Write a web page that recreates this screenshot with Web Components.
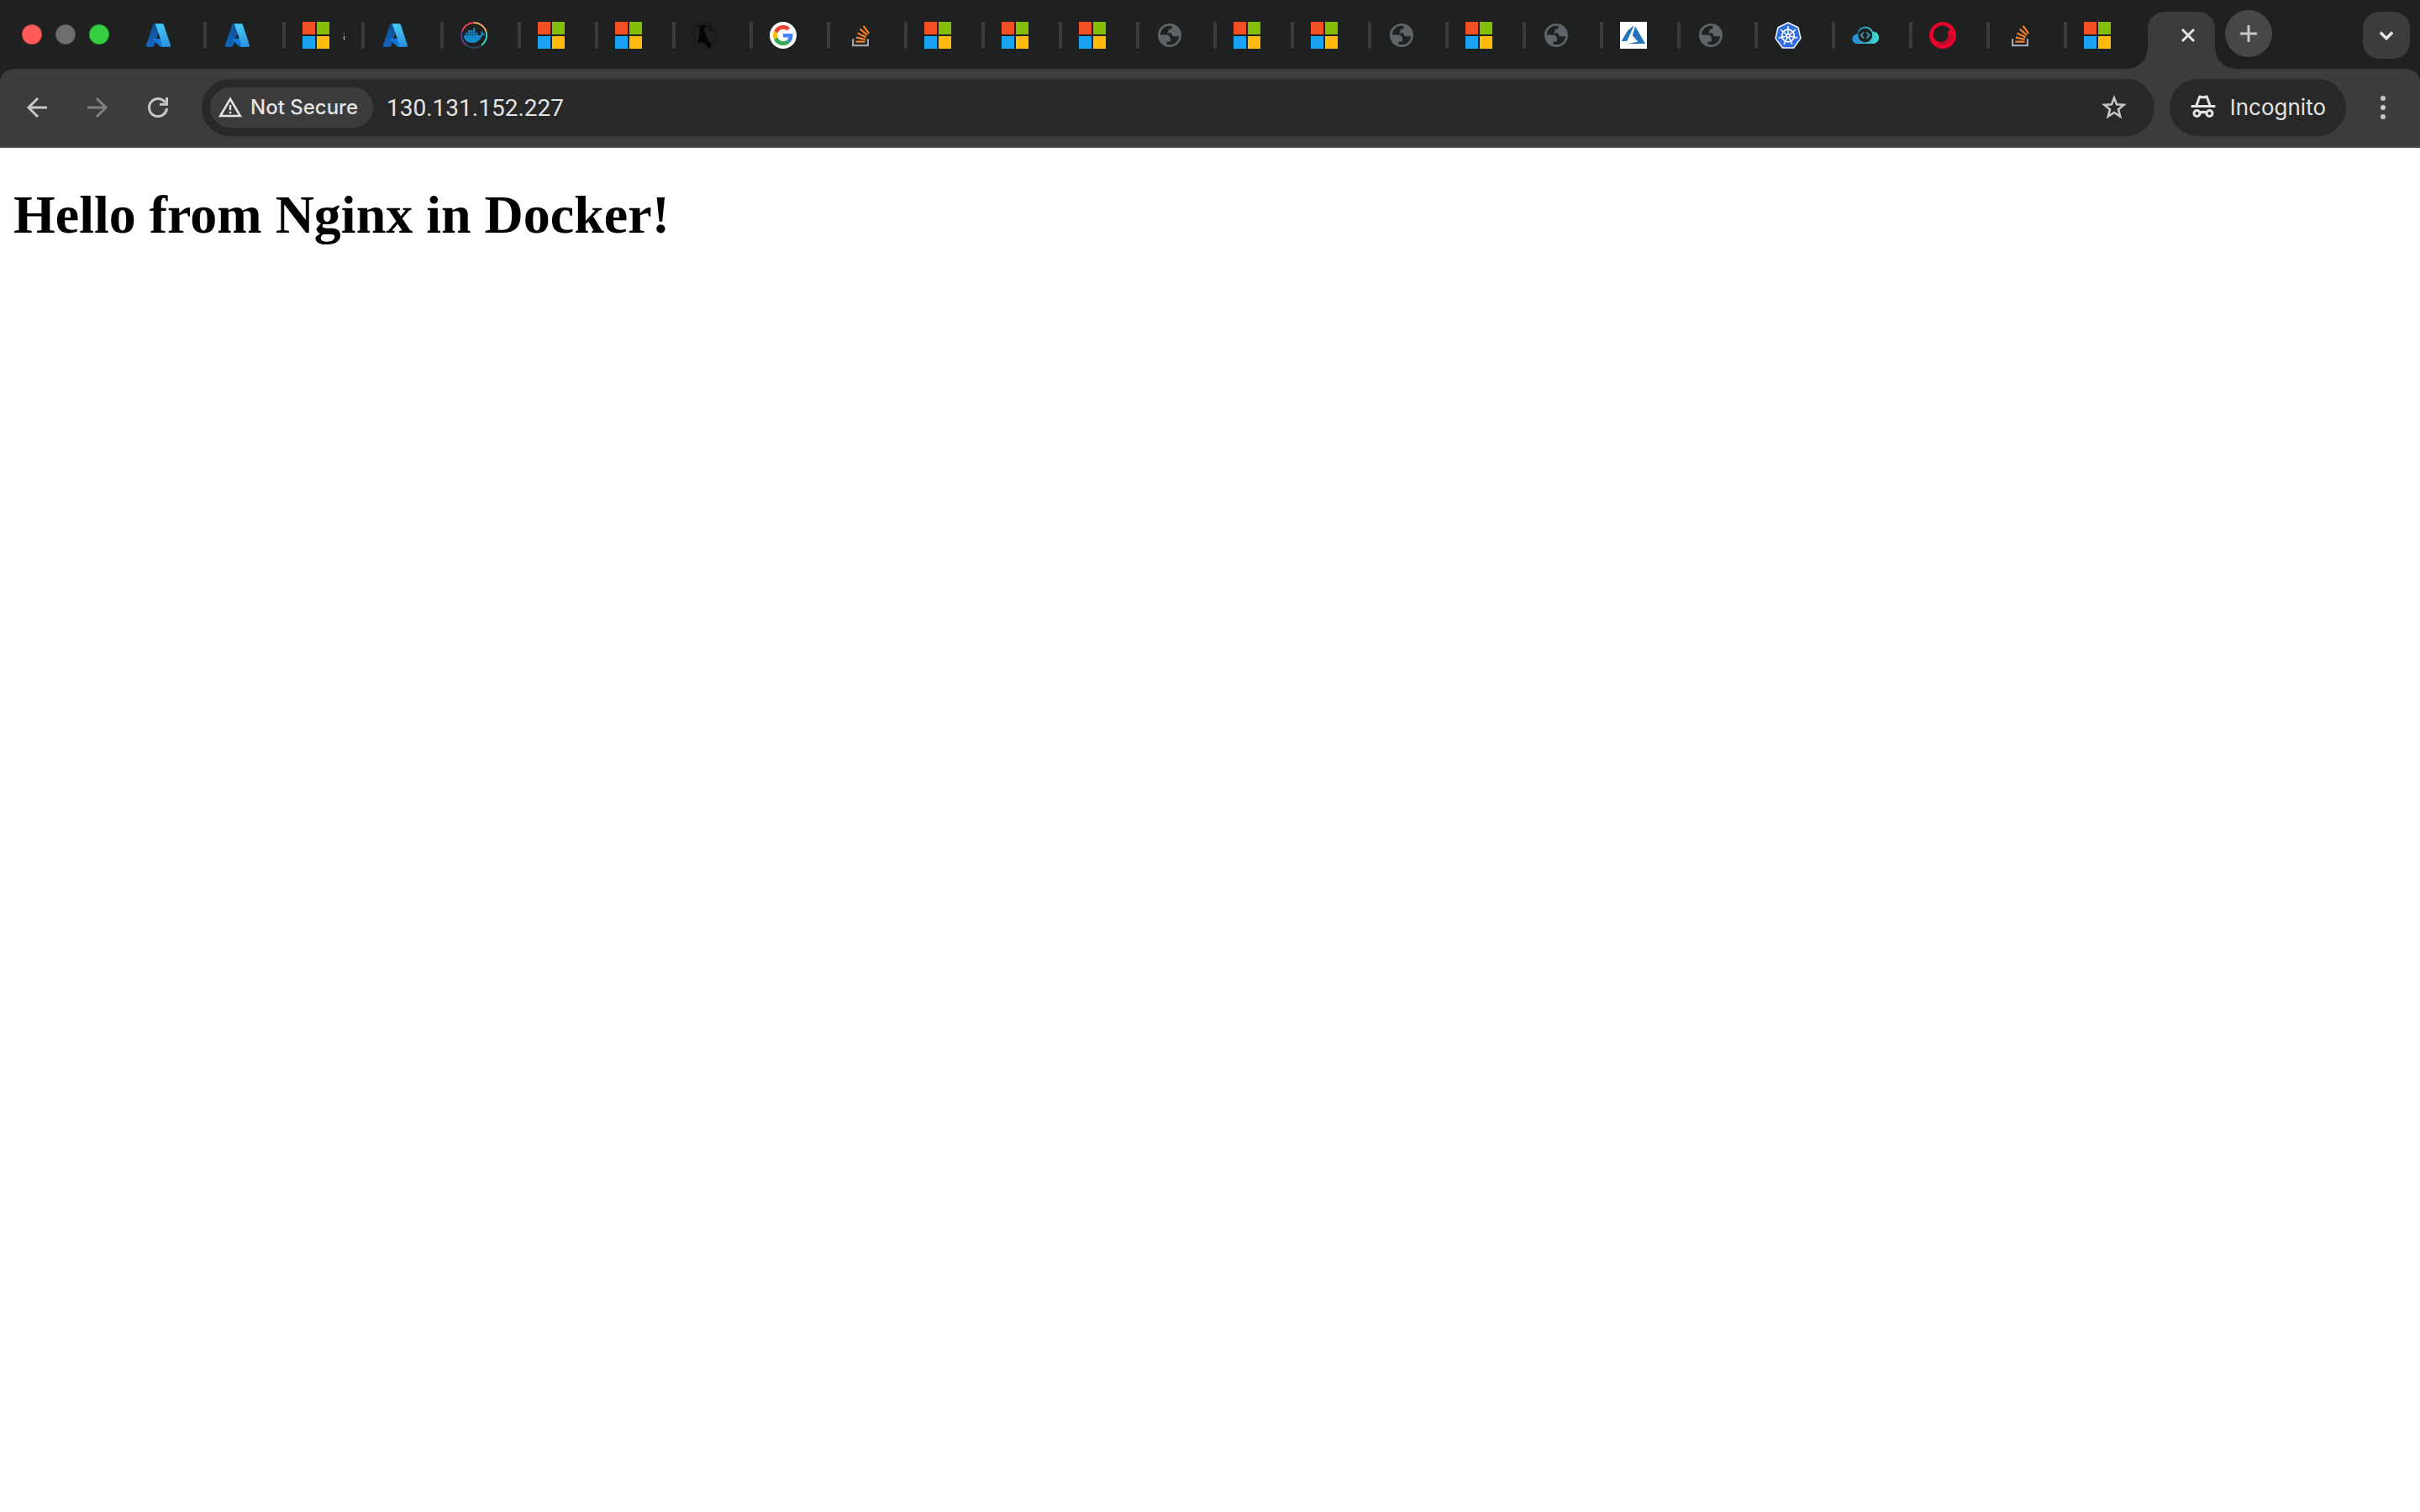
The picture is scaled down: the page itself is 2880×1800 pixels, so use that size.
<!DOCTYPE html>
<html lang="en">
<head>
<meta charset="utf-8">
<title>130.131.152.227</title>
<style>
  body { margin: 0; background: #fff; font-family: "Liberation Serif", "Times New Roman", serif; }
  h1 { margin: 0; font-size: 64px; line-height: 74px; font-weight: 700; color: #000; }
</style>
</head>
<body>
<browser-window>
  <tab-strip slot="tabs"></tab-strip>
  <tool-bar slot="toolbar" address="130.131.152.227"></tool-bar>
  <h1>Hello from Nginx in Docker!</h1>
</browser-window>

<script>
const msTiles = `<path fill="#f34f24" d="M0 0h15v15H0z"/><path fill="#84bf06" d="M17 0h15v15H17z"/><path fill="#1aa3f2" d="M0 17h15v15H0z"/><path fill="#ffba0b" d="M17 17h15v15H17z"/>`;

const spokes = Array.from({ length: 7 }, (_, i) =>
  `<path d="M16 14.5V5.6" transform="rotate(${i * 360 / 7} 16 16.5)"/>`).join("");

const ICONS = {
  azure: `<defs>
      <linearGradient id="a" x1="60" y1="8" x2="20" y2="90" gradientUnits="userSpaceOnUse"><stop stop-color="#114a8b"/><stop offset="1" stop-color="#0f66c0"/></linearGradient>
      <linearGradient id="b" x1="46" y1="10" x2="76" y2="88" gradientUnits="userSpaceOnUse"><stop stop-color="#46cbf7"/><stop offset="1" stop-color="#2c91e0"/></linearGradient></defs>
    <g transform="translate(.5 0) scale(.3333)">
      <path fill="url(#a)" d="M33.338 6.544h26.038l-27.03 80.087a4.152 4.152 0 0 1-3.933 2.824H8.149a4.145 4.145 0 0 1-3.928-5.47L29.404 9.368a4.152 4.152 0 0 1 3.934-2.825z"/>
      <path fill="#0f78d8" d="M71.175 60.261h-41.29a1.911 1.911 0 0 0-1.305 3.309l26.532 24.764a4.171 4.171 0 0 0 2.846 1.121h23.38z"/>
      <path fill="url(#b)" d="M66.595 9.364a4.145 4.145 0 0 0-3.928-2.82H33.648a4.146 4.146 0 0 1 3.928 2.82l25.184 74.62a4.146 4.146 0 0 1-3.928 5.472h29.02a4.146 4.146 0 0 0 3.927-5.472z"/></g>`,
  microsoft: msTiles,
  docker: `<g fill="none" stroke-width="1.8">
      <path stroke="#f2435a" d="M2 11A15 15 0 0 1 16 1"/><path stroke="#f6a95b" d="M16 1A15 15 0 0 1 30.6 12"/>
      <path stroke="#3de0cf" d="M30.6 12A15 15 0 0 1 25 28"/><path stroke="#27445c" d="M25 28A15 15 0 0 1 7 28"/>
      <path stroke="#663da6" d="M7 28A15 15 0 0 1 2 11"/></g>
    <g fill="#1488c9"><path d="M4 16h18.6c1 0 1.8-.3 2.3-.8-1-1.4-.8-3 .2-4.4 1.2.8 1.6 1.8 1.5 2.8 1 0 1.8.2 2.4.7-.5 1.4-1.700 2.100-3.300 2.200C23.600 22 19.500 25 14 25 7.500 25 4 21.500 4 16z"/>
      <path d="M6 12.800h2.500v2.600H6zM9 12.800h2.500v2.600H9zM12 12.800h2.500v2.600H12zM15 12.800h2.500v2.600H15zM18 12.800h2.500v2.600H18zM9 9.900h2.500v2.500H9zM12 9.900h2.500v2.500H12zM15 9.900h2.500v2.500H15zM15 7h2.500v2.500H15z"/></g>`,
  penguin: `<circle cx="15" cy="15" r="14" fill="none" stroke="#191b1a" stroke-width="2"/>
    <path fill="#050505" d="M8.500 5.500C10 3.500 13 3 16 4l-.500 1.500c-1.500 2-1.500 5-.500 8l2.500 6 2 4.500 2.500 1.500-1 6.500h-2.500l-1-4-4-3.500L6 25l.500-3 1.500-3z"/>
    <path fill="none" stroke="#101211" stroke-width="2" d="M17.500 5c3 0 6 1.500 6.500 5.500-1.500-2-4-1.500-5 0"/>`,
  google: `<circle cx="16" cy="16" r="16" fill="#fff"/><g transform="translate(4 4) scale(.5)">
      <path fill="#ea4335" d="M24 9.500c3.540 0 6.710 1.220 9.210 3.600l6.850-6.850C35.900 2.380 30.470 0 24 0 14.620 0 6.510 5.380 2.560 13.220l7.980 6.190C12.430 13.720 17.740 9.500 24 9.500z"/>
      <path fill="#4285f4" d="M46.980 24.550c0-1.570-.150-3.090-.380-4.550H24v9.020h12.940c-.580 2.960-2.260 5.480-4.780 7.180l7.730 6c4.510-4.180 7.090-10.360 7.090-17.650z"/>
      <path fill="#fbbc05" d="M10.530 28.590c-.480-1.450-.760-2.990-.760-4.590s.270-3.140.760-4.590l-7.980-6.190C.920 16.460 0 20.120 0 24c0 3.880.920 7.540 2.560 10.780z"/>
      <path fill="#34a853" d="M24 48c6.480 0 11.930-2.130 15.890-5.810l-7.730-6c-2.150 1.450-4.920 2.300-8.160 2.300-6.260 0-11.570-4.220-13.470-9.910l-7.980 6.190C6.510 42.620 14.620 48 24 48z"/></g>`,
  stack: `<g transform="translate(-.5 0) scale(.288)"><path fill="#9ba5ab" d="M84.400 93.800V70.600h7.700v30.900H22.600V70.600h7.700v23.200z"/>
      <path fill="#f4802b" d="M38.800 68.400l37.800 7.900 1.600-7.600-37.800-7.900-1.600 7.600zm5-18l35 16.300 3.200-7-35-16.400-3.200 7.100zm9.700-17.200l29.700 24.700 4.900-5.900-29.700-24.700-4.900 5.900zm19.200-18.300l-6.200 4.600 23 31 6.200-4.600-23-31zM38 86h38.600v-7.700H38V86z"/></g>`,
  globe: `<circle cx="16" cy="16" r="12.600" fill="none" stroke="#5f6368" stroke-width="2.800"/>
    <path fill="#5f6368" d="M3 15.500h9c3 0 5 2 5 5v3h-4.500v4.500L8 26l-4-5zM18.500 3.500v3.500c0 1-.7 1.800-1.800 1.800H14.500v2.200c0 .8-.5 1.300-1.200 1.500v1H17c1 0 1.700.7 1.700 1.700 0 1.300 1 2.100 2.300 2.100h7.500V13l-3-6z"/>`,
  azureOld: `<path fill="#fff" d="M0 0h32v32H0z"/><path fill="#2374b8" d="M16.800 4L9 10.500 1.800 23h6.400zM18 5.200L30 26H9l12.300-2.200-6.600-7.900z"/>`,
  kubernetes: `<path fill="#326ce5" stroke="#f4f7fd" stroke-width="1.500" stroke-linejoin="round" d="M16 1l12 5.700 3 12.900-8.300 11.400H9.300L1 19.600 4 6.700z"/>
    <g fill="none" stroke="#fff" stroke-width="1.500" stroke-linecap="round"><circle cx="16" cy="16.500" r="7.300" stroke-width="1.800"/>${spokes}<circle cx="16" cy="16.500" r="2"/></g>`,
  cloud: `<defs><linearGradient id="c" x1="0" x2="32" y1="0" y2="0" gradientUnits="userSpaceOnUse"><stop stop-color="#2587dd"/><stop offset="1" stop-color="#41dccb"/></linearGradient></defs>
    <path fill="url(#c)" d="M5.500 26A5.500 5.500 0 0 1 6.500 14.600 9.500 9.500 0 0 1 24.800 11.600C29 11.600 32 14.800 32 18.700S29 26 25 26z"/>
    <circle cx="15.700" cy="15.900" r="8.500" fill="#1f2120"/><path fill="none" stroke="#2fb4d6" stroke-width="1.500" d="M14 12.500L10.700 16l3.300 3.500M17.500 12.500l3.300 3.500-3.300 3.500"/>`,
  swirl: `<circle cx="16" cy="16" r="16" fill="#e4042c"/>
    <path fill="#1f2120" d="M15.500 4.600c4 0 7.500 1.900 9.600 4.800l-3.300 2.300.8 3.800c.2 4.500-3.300 8.600-8.600 8.700-5.500 0-9.200-4-9.200-9 0-6 5-10.600 10.700-10.600z"/>
    <path fill="none" stroke="#8c1024" stroke-width=".8" d="M24.800 14c.6 7-4.500 12-12.500 11.700M27.300 15.500C27 23 21 28 13 27.300"/>`,
  back: `<path fill="none" stroke="currentColor" stroke-width="3" d="M28 16H5.500M17 5L6 16l11 11"/>`,
  forward: `<path fill="none" stroke="currentColor" stroke-width="3" d="M4 16h22.500M15 5l11 11-11 11"/>`,
  reload: `<path fill="none" stroke="currentColor" stroke-width="3" d="M26.500 17A10.500 10.500 0 1 1 24.500 9.800M26.500 4v8.300H18"/>`,
  warning: `<path fill="none" stroke="currentColor" stroke-width="2.600" d="M16 5.800L4.200 26h23.600z"/><path fill="currentColor" d="M14.800 13h2.400v6h-2.400zM14.800 20.800h2.400v2.400h-2.400z"/>`,
  star: `<path fill="none" stroke="currentColor" stroke-width="2.600" d="M16 4.500l3 7.800 8.600.6-6.600 5.400 2.200 8.300L16 22l-7.200 4.600 2.200-8.300-6.600-5.400 8.600-.6z"/>`,
  incognito: `<path fill="none" stroke="currentColor" stroke-width="3" stroke-linejoin="round" d="M7.800 14L11.800 3c2.500.9 5.900.9 8.400 0l4 11"/>
    <path fill="currentColor" d="M1.600 13h28.800v3H1.600z"/><g fill="none" stroke="currentColor" stroke-width="3"><circle cx="8.500" cy="23" r="3.500"/><circle cx="23.500" cy="23" r="3.500"/><path d="M12 22.500c2.500-1.400 5.500-1.400 8 0"/></g>`,
  close: `<path fill="none" stroke="currentColor" stroke-width="3" d="M9 9l14 14M23 9L9 23"/>`,
  plus: `<path fill="none" stroke="currentColor" stroke-width="3" d="M16 6v20M6 16h20"/>`,
  chevron: `<path fill="none" stroke="currentColor" stroke-width="3.500" d="M8.800 12.500l7.200 7.200 7.200-7.200"/>`,
  dots: `<g fill="currentColor"><circle cx="16" cy="5" r="3"/><circle cx="16" cy="16" r="3"/><circle cx="16" cy="27" r="3"/></g>`
};

const RESET = `
  * { box-sizing: border-box; }
  button { display: flex; align-items: center; justify-content: center; margin: 0; padding: 0; border: 0; background: none; color: inherit; font: inherit; }`;

class Base extends HTMLElement {
  connectedCallback() {
    if (this.shadowRoot) return;
    this.attachShadow({ mode: "open" }).innerHTML = `<style>${RESET}</style>${this.render()}`;
  }
}

customElements.define("ui-icon", class extends Base {
  render() {
    return `<style>:host { display: block; width: 32px; height: 32px; flex: none; } svg { display: block; }</style>
      <svg width="32" height="32" viewBox="0 0 32 32" aria-hidden="true">${ICONS[this.getAttribute("name")]}</svg>`;
  }
});

customElements.define("window-lights", class extends Base {
  render() {
    return `<style>
      :host { display: flex; gap: 16px; }
      button { width: 24px; height: 24px; border-radius: 50%; border: 1px solid #0003; }
      .close { background: #ff5a57; } .min { background: #6e6e6e; } .max { background: #37cf42; }
    </style>
    <button class="close" aria-label="Close window"></button><button class="min" aria-label="Minimize"></button><button class="max" aria-label="Full screen"></button>`;
  }
});

customElements.define("browser-tab", class extends Base {
  render() {
    return `<style>
      :host { display: flex; align-items: center; height: 32px; flex: none; width: 92px; border-right: 4px solid #3c3c3c; border-radius: 2px; }
      :host([wide]) { width: 94px; }
      :host(:last-of-type) { border-color: transparent; }
      button { flex: 1; height: 32px; padding-left: 20px; justify-content: flex-start; }
      i { align-self: flex-end; width: 1px; height: 9px; margin: 0 0 10px 17px; background: linear-gradient(#777 2px, #1f2120 2px 4px, #ccc 4px); }
    </style>
    <button aria-label="${this.getAttribute("icon")} tab"><ui-icon name="${this.getAttribute("icon")}"></ui-icon>${this.hasAttribute("sliver") ? "<i></i>" : ""}</button>`;
  }
});

customElements.define("active-tab", class extends Base {
  render() {
    return `<style>
      :host { position: relative; display: flex; justify-content: flex-end; align-items: center; align-self: flex-end; width: 80px; height: 68px; margin-left: 4px; padding: 0 16px 12px 0; background: #3c3c3c; border-radius: 20px 20px 0 0; color: #e3e3e3; flex: none; box-sizing: border-box; }
      :host::before, :host::after { content: ""; position: absolute; bottom: 0; width: 24px; height: 24px; }
      :host::before { right: 100%; background: radial-gradient(circle at 0 0, transparent 23px, #3c3c3c 24px); }
      :host::after { left: 100%; background: radial-gradient(circle at 100% 0, transparent 23px, #3c3c3c 24px); }
    </style>
    <button aria-label="Close tab"><ui-icon name="close"></ui-icon></button>`;
  }
});

const TABS = ["azure", "azure", "microsoft", "azure", "docker", "microsoft", "microsoft", "penguin", "google", "stack",
  "microsoft", "microsoft", "microsoft", "globe", "microsoft", "microsoft", "globe", "microsoft", "globe", "azureOld",
  "globe", "kubernetes", "cloud", "swirl", "stack", "microsoft"];

customElements.define("tab-strip", class extends Base {
  render() {
    const tabs = TABS.map((icon, i) =>
      `<browser-tab icon="${icon}"${i < 4 ? " wide" : ""}${i === 2 ? " sliver" : ""}></browser-tab>`).join("");
    return `<style>
      :host { display: flex; align-items: center; height: 82px; padding: 0 12px 0 26px; background: #1f2120; }
      nav { display: flex; align-items: center; height: 82px; margin-left: 22px; padding-top: 2px; }
      .new { width: 56px; height: 56px; margin: 0 0 2px 12px; border-radius: 50%; background: #474747; color: #c7c7c7; flex: none; }
      .search { width: 56px; height: 56px; margin: 2px 0 0 auto; border-radius: 20px; background: #3c3c3c; color: #e3e3e3; flex: none; }
    </style>
    <window-lights></window-lights>
    <nav aria-label="Tabs">${tabs}<active-tab></active-tab></nav>
    <button class="new" aria-label="New tab"><ui-icon name="plus"></ui-icon></button>
    <button class="search" aria-label="Search tabs"><ui-icon name="chevron"></ui-icon></button>`;
  }
});

customElements.define("omni-box", class extends Base {
  render() {
    return `<style>
      :host { display: flex; align-items: center; flex: 1; height: 68px; padding: 0 32px 0 10px; border-radius: 34px; background: #282828; color: #e3e3e3; }
      .chip { height: 48px; padding: 0 18px 0 8px; gap: 8px; border-radius: 24px; background: #3c3c3c; font: 500 24px/32px Inter, sans-serif; white-space: nowrap; }
      input { flex: 1; min-width: 0; height: 48px; margin: 0 0 0 16px; padding: 0; border: 0; outline: 0; background: none; color: inherit; font: 400 28px/40px Roboto, sans-serif; }
      .star { color: #c7c7c7; }
    </style>
    <button class="chip"><ui-icon name="warning"></ui-icon><span>Not Secure</span></button>
    <input type="text" aria-label="Address" value="${this.getAttribute("address")}">
    <button class="star" aria-label="Bookmark this page"><ui-icon name="star"></ui-icon></button>`;
  }
});

customElements.define("tool-bar", class extends Base {
  render() {
    return `<style>
      :host { display: block; background: #1f2120; }
      .bar { display: flex; align-items: center; height: 94px; padding: 0 28px; background: #3c3c3c; border-bottom: 2px solid #4a4848; border-radius: 16px 16px 0 0; color: #c7c7c7; }
      .nav { display: flex; gap: 40px; margin-right: 36px; }
      .off { color: #808080; }
      .mode { height: 68px; margin: 0 28px 0 18px; padding: 0 24px; gap: 16px; border-radius: 34px; background: #282828; color: #e3e3e3; font: 400 26px/36px Inter, sans-serif; }
    </style>
    <div class="bar">
      <div class="nav">
        <button aria-label="Back"><ui-icon name="back"></ui-icon></button>
        <button class="off" aria-label="Forward"><ui-icon name="forward"></ui-icon></button>
        <button aria-label="Reload"><ui-icon name="reload"></ui-icon></button>
      </div>
      <omni-box address="${this.getAttribute("address")}"></omni-box>
      <button class="mode"><ui-icon name="incognito"></ui-icon><span>Incognito</span></button>
      <button aria-label="Menu"><ui-icon name="dots"></ui-icon></button>
    </div>`;
  }
});

customElements.define("browser-window", class extends Base {
  render() {
    return `<style>
      :host { display: flex; flex-direction: column; min-height: 100vh; background: #fff; }
      main { flex: 1; padding: 43px 16px; }
    </style>
    <slot name="tabs"></slot><slot name="toolbar"></slot><main><slot></slot></main>`;
  }
});
</script>
</body>
</html>
